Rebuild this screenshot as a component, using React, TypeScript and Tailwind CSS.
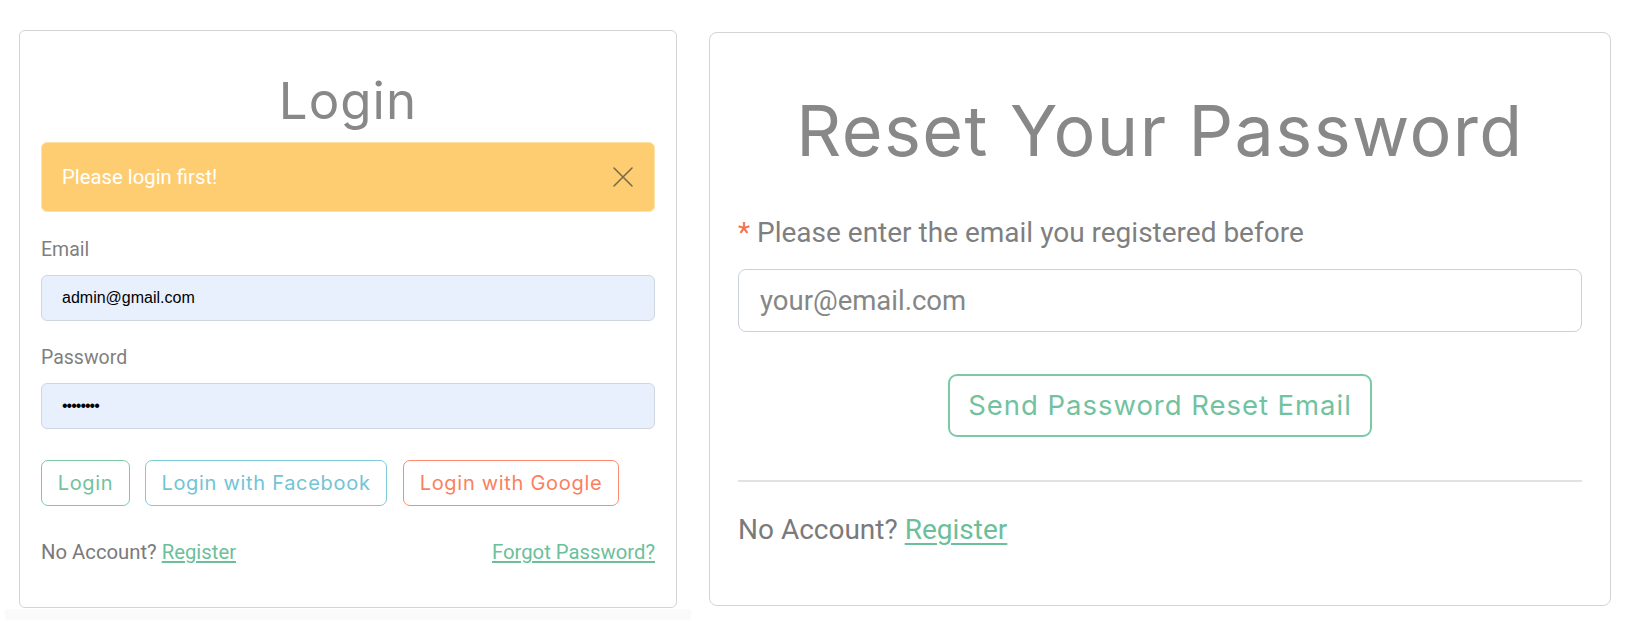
import React from 'react';

const heading = "font-['Inter',sans-serif] tracking-[0.02em]";
const btn = "font-['Inter',sans-serif] tracking-[0.035em]";
const body = "font-['Roboto','Liberation_Sans',sans-serif]";

function CloseIcon() {
  return (
    <svg width="22" height="22" viewBox="0 0 22 22" fill="none" stroke="#7a6a48" strokeWidth="1.6" strokeLinecap="round">
      <path d="M2 2L20 20M20 2L2 20" />
    </svg>
  );
}

function LoginCard() {
  return (
    <div className="ml-[14px] mt-[30px] w-[658px] h-[578px] rounded-[6px] border border-[#d4d4d4] bg-white px-[21px] pt-[35px]">
      <h1 className={`${heading} h-[70px] text-center text-[51px] leading-[70px] text-[#888888]`}>Login</h1>

      <div className="mt-[6px] flex h-[70px] items-center justify-between rounded-[6px] border border-[#fde3a6] bg-[#fecd71] pl-[20px] pr-[20px]">
        <span className={`${body} text-[20.3px] text-white`}>Please login first!</span>
        <CloseIcon />
      </div>

      <div className={`${body} mt-[26px] h-[24px] text-[19.5px] leading-[24px] text-[#7f7f7f]`}>Email</div>
      <div className="mt-[13px] flex h-[46px] items-center rounded-[6px] border border-[#cfd6e0] bg-[#e8f0fe] px-[20px]">
        <span className="font-['Liberation_Sans',sans-serif] text-[16px] text-black">admin@gmail.com</span>
      </div>

      <div className={`${body} mt-[25px] h-[24px] text-[19.5px] leading-[24px] text-[#7f7f7f]`}>Password</div>
      <div className="mt-[13px] flex h-[46px] items-center rounded-[6px] border border-[#cfd6e0] bg-[#e8f0fe] px-[20px]">
        <span className="font-['Liberation_Sans',sans-serif] text-[16px] tracking-[-1px] text-black">••••••••</span>
      </div>

      <div className={`${btn} mt-[31px] flex h-[46px] gap-[15px] text-[20px]`}>
        <button className="h-full w-[89px] rounded-[7px] border border-[#7cc9a8] text-[#72c29f]">Login</button>
        <button className="h-full w-[242px] rounded-[7px] border border-[#7ecad9] text-[#72c4d6]">Login with Facebook</button>
        <button className="ml-[1px] h-full w-[216px] rounded-[7px] border border-[#fc8b6f] text-[#fb7f60]">Login with Google</button>
      </div>

      <div className={`${body} mt-[34px] flex h-[24px] items-center justify-between text-[20.3px] leading-[24px]`}>
        <span className="text-[#7a7a7a]">
          No Account? <a href="#" className="text-[#6cbf9a] underline underline-offset-2">Register</a>
        </span>
        <a href="#" className="text-[#6cbf9a] underline underline-offset-2">Forgot Password?</a>
      </div>
    </div>
  );
}

function ResetCard() {
  return (
    <div className="ml-[18px] mt-[32px] w-[902px] h-[574px] rounded-[8px] border border-[#d4d4d4] bg-white px-[28px] pt-[63px]">
      <h1 className={`${heading} h-[70px] text-center text-[70px] leading-[70px] text-[#888888]`}>Reset Your Password</h1>

      <div className={`${body} mt-[53px] h-[28px] text-[28px] leading-[28px] text-[#7f7f7f]`}>
        <span className="text-[#f5704e]">*</span> Please enter the email you registered before
      </div>

      <div className="mt-[22px] flex h-[63px] items-center rounded-[8px] border border-[#cbd1da] bg-white px-[21px]">
        <span className={`${body} text-[27.5px] text-[#868686]`}>your@email.com</span>
      </div>

      <div className="mt-[42px] flex justify-center">
        <button className={`${btn} h-[63px] w-[424px] rounded-[9px] border-2 border-[#7cc9a8] text-[27.5px] text-[#72c29f]`}>
          Send Password Reset Email
        </button>
      </div>

      <div className="mt-[43px] h-[2px] bg-[#e2e2e2]" />

      <div className={`${body} mt-[34px] h-[28px] text-[28px] leading-[28px] text-[#7a7a7a]`}>
        No Account? <a href="#" className="text-[#6cbf9a] underline underline-offset-4">Register</a>
      </div>
    </div>
  );
}

export default function App() {
  return (
    <div className="flex h-[638px] w-[1640px] items-start bg-white">
      <div className="ml-[5px] flex w-[686px] flex-col">
        <LoginCard />
        <div className="mt-[1px] h-[11px] bg-[#fafafa]" />
      </div>
      <ResetCard />
    </div>
  );
}
